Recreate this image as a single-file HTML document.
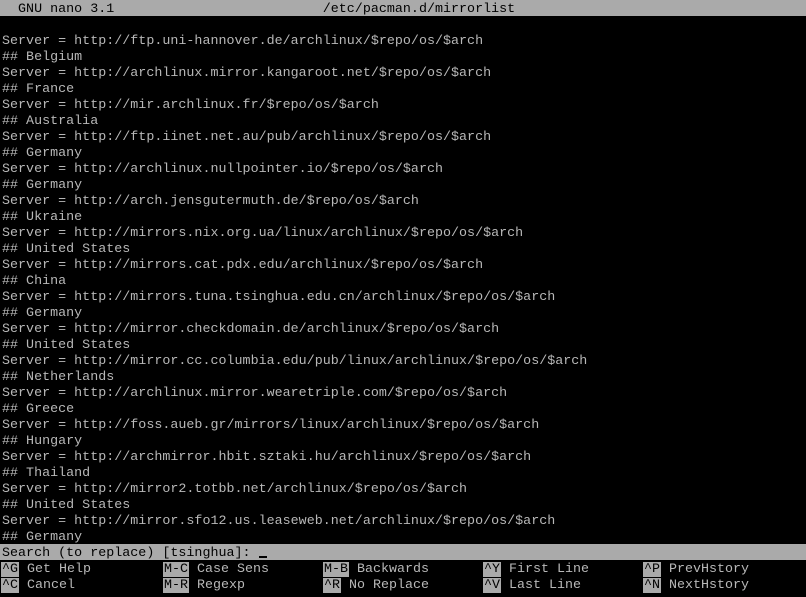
<!DOCTYPE html>
<html><head><style>
body{margin:0;background:#000;width:806px;height:597px;overflow:hidden;font-family:"Liberation Mono",monospace;font-size:13.33px;line-height:16px;color:#b8b8b8}
.l{position:absolute;left:0;white-space:pre;height:16px;padding-left:2px;letter-spacing:0.02px}
.t{position:absolute;left:2px;white-space:pre;top:2px;letter-spacing:0.02px}
.bar{background:#aaa;color:#000;width:804px}
.k{position:absolute;white-space:pre;margin-top:2px}
.k b{font-weight:normal;background:#aaa;color:#000;padding:0 1px 0 1px;margin-left:-1px}
</style></head><body>
<div class="l bar" style="top:0;height:16px"></div>
<div class="t" style="color:#000">  GNU nano 3.1                          /etc/pacman.d/mirrorlist</div>
<div class="t" style="top:34px">Server = http://ftp.uni-hannover.de/archlinux/$repo/os/$arch
## Belgium
Server = http://archlinux.mirror.kangaroot.net/$repo/os/$arch
## France
Server = http://mir.archlinux.fr/$repo/os/$arch
## Australia
Server = http://ftp.iinet.net.au/pub/archlinux/$repo/os/$arch
## Germany
Server = http://archlinux.nullpointer.io/$repo/os/$arch
## Germany
Server = http://arch.jensgutermuth.de/$repo/os/$arch
## Ukraine
Server = http://mirrors.nix.org.ua/linux/archlinux/$repo/os/$arch
## United States
Server = http://mirrors.cat.pdx.edu/archlinux/$repo/os/$arch
## China
Server = http://mirrors.tuna.tsinghua.edu.cn/archlinux/$repo/os/$arch
## Germany
Server = http://mirror.checkdomain.de/archlinux/$repo/os/$arch
## United States
Server = http://mirror.cc.columbia.edu/pub/linux/archlinux/$repo/os/$arch
## Netherlands
Server = http://archlinux.mirror.wearetriple.com/$repo/os/$arch
## Greece
Server = http://foss.aueb.gr/mirrors/linux/archlinux/$repo/os/$arch
## Hungary
Server = http://archmirror.hbit.sztaki.hu/archlinux/$repo/os/$arch
## Thailand
Server = http://mirror2.totbb.net/archlinux/$repo/os/$arch
## United States
Server = http://mirror.sfo12.us.leaseweb.net/archlinux/$repo/os/$arch
## Germany</div>
<div class="l bar" style="top:544px;padding-left:0;width:806px"></div>
<div class="t" style="top:546px;color:#000">Search (to replace) [tsinghua]: <span style="display:inline-block;width:8px;height:2px;background:#000;vertical-align:-2px"></span></div>
<div class="k" style="top:560px;left:2px"><b>^G</b> Get Help</div>
<div class="k" style="top:576px;left:2px"><b>^C</b> Cancel</div>
<div class="k" style="top:560px;left:164px"><b>M-C</b> Case Sens</div>
<div class="k" style="top:576px;left:164px"><b>M-R</b> Regexp</div>
<div class="k" style="top:560px;left:324px"><b>M-B</b> Backwards</div>
<div class="k" style="top:576px;left:324px"><b>^R</b> No Replace</div>
<div class="k" style="top:560px;left:484px"><b>^Y</b> First Line</div>
<div class="k" style="top:576px;left:484px"><b>^V</b> Last Line</div>
<div class="k" style="top:560px;left:644px"><b>^P</b> PrevHstory</div>
<div class="k" style="top:576px;left:644px"><b>^N</b> NextHstory</div>
</body></html>
